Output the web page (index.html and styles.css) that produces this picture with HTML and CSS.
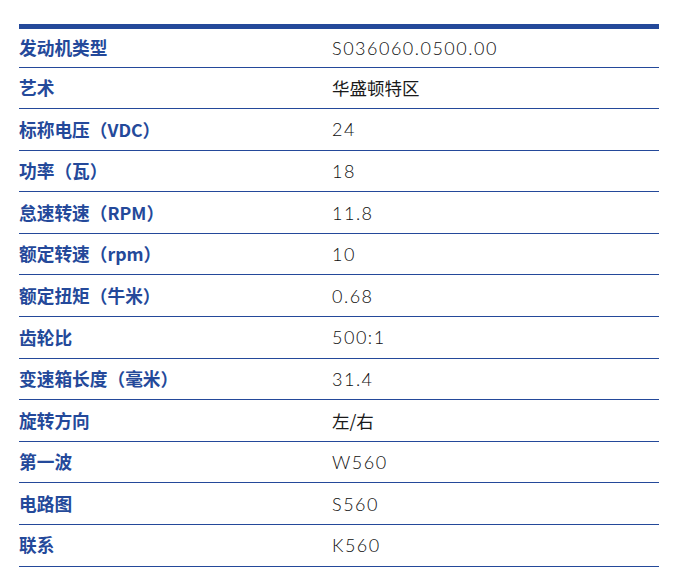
FILE: index.html
```html
<!DOCTYPE html>
<html lang="zh">
<head>
<meta charset="utf-8">
<link rel="stylesheet" href="styles.css">
</head>
<body>
<div class="spec">
  <div class="row first"><div class="label">发动机类型</div><div class="value">S036060.0500.00</div></div>
  <div class="row"><div class="label">艺术</div><div class="value cjk">华盛顿特区</div></div>
  <div class="row"><div class="label">标称电压（VDC）</div><div class="value">24</div></div>
  <div class="row"><div class="label">功率（瓦）</div><div class="value">18</div></div>
  <div class="row"><div class="label">怠速转速（RPM）</div><div class="value">11.8</div></div>
  <div class="row"><div class="label">额定转速（rpm）</div><div class="value">10</div></div>
  <div class="row"><div class="label">额定扭矩（牛米）</div><div class="value">0.68</div></div>
  <div class="row"><div class="label">齿轮比</div><div class="value">500:1</div></div>
  <div class="row"><div class="label">变速箱长度（毫米）</div><div class="value">31.4</div></div>
  <div class="row"><div class="label">旋转方向</div><div class="value cjk">左/右</div></div>
  <div class="row"><div class="label">第一波</div><div class="value">W560</div></div>
  <div class="row"><div class="label">电路图</div><div class="value">S560</div></div>
  <div class="row"><div class="label">联系</div><div class="value">K560</div></div>
</div>
</body>
</html>
```
FILE: styles.css
```css
html, body {
  margin: 0;
  padding: 0;
  background: #ffffff;
}
body {
  padding: 24px 0 0 19px;
}
.spec {
  width: 640px;
  border-top: 5px solid #24499a;
  display: flex;
  flex-direction: column;
}
.row {
  display: grid;
  grid-template-columns: 313px 1fr;
  align-items: center;
  height: 40.6px;
  border-bottom: 1px solid #24499a;
}
.row.first {
  height: 37.5px;
}
.label {
  font-family: "Noto Sans CJK SC", "Noto Sans", sans-serif;
  font-weight: 700;
  font-size: 17.7px;
  color: #24499a;
  line-height: 1;
}
.value {
  font-family: Lato, "Noto Sans CJK SC", sans-serif;
  font-weight: 300;
  font-size: 18px;
  letter-spacing: 1.5px;
  color: #0e0e0e;
  line-height: 1;
}
.value.cjk {
  font-family: "Noto Sans CJK SC", sans-serif;
  font-weight: 400;
  font-size: 17.5px;
  letter-spacing: 0;
  color: #1a1a1a;
}
```
